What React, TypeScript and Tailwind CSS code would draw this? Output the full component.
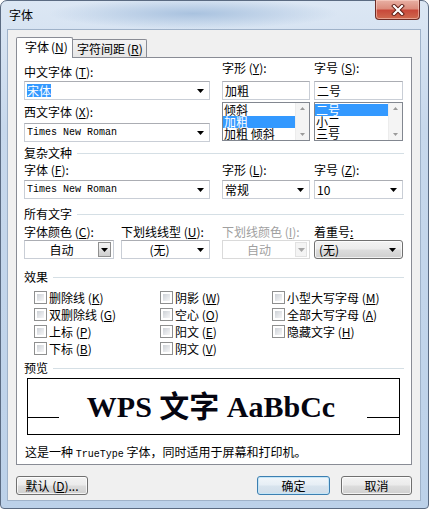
import type { ReactNode } from 'react';

const btnFace =
  'bg-[linear-gradient(180deg,#f3f3f3_0%,#ebebeb_48%,#dddddd_52%,#cfcfcf_100%)]';

function Key({ children }: { children: ReactNode }) {
  return <span className="underline underline-offset-[1px]">{children}</span>;
}

function Label({ text, k, colon = true, disabled, className = '' }: { text: string; k: string; colon?: boolean; disabled?: boolean; className?: string }) {
  return (
    <div className={`h-[14px] leading-[14px] whitespace-nowrap ${disabled ? 'text-[#a0a0a0]' : ''} ${className}`}>
      {text} (<Key>{k}</Key>){colon ? ':' : ''}
    </div>
  );
}

function Arrow({ disabled, className = '' }: { disabled?: boolean; className?: string }) {
  return (
    <svg width="7" height="4" viewBox="0 0 7 4" className={`shrink-0 ${className}`}>
      <path d="M0 0h7L3.5 4z" fill={disabled ? '#a6a6a6' : '#000'} />
    </svg>
  );
}

function Combo({ children, className = '', center, mono }: { children: ReactNode; className?: string; center?: boolean; mono?: boolean }) {
  return (
    <div className={`h-[19px] border border-[#c9ced6] border-t-[#abadb3] bg-white flex items-center ${className}`}>
      <div className={`flex-1 whitespace-nowrap ${center ? 'text-center' : 'pl-[2px]'} ${mono ? "font-['Liberation_Mono',monospace] text-[10px]" : ''}`}>
        {children}
      </div>
      <Arrow className="mr-[5px]" />
    </div>
  );
}

function Header({ title, className = '' }: { title: string; className?: string }) {
  return (
    <div className={`h-[14px] leading-[14px] flex items-center ${className}`}>
      <span>{title}</span>
      <div className="flex-1 h-px bg-[#d5dfe5] ml-[5px]" />
    </div>
  );
}

function ScrollStrip() {
  return (
    <div className="w-[14px] bg-[#f4f4f4] border-l border-[#ececec] flex flex-col items-center justify-between py-[4px]">
      <svg width="5" height="3" viewBox="0 0 5 3"><path d="M2.5 0L5 3H0z" fill="#9a9a9a" /></svg>
      <svg width="5" height="3" viewBox="0 0 5 3"><path d="M0 0h5L2.5 3z" fill="#9a9a9a" /></svg>
    </div>
  );
}

function ListBox({ items, selected }: { items: string[]; selected: number }) {
  return (
    <div className="h-[39px] mt-[2px] border border-[#828790] bg-white flex">
      <div className="flex-1 flex flex-col pt-[1px]">
        {items.map((it, i) => (
          <div key={it} className={`h-[12px] leading-[12px] pl-[1px] whitespace-nowrap ${i === selected ? 'bg-[#3399ff] text-white' : ''}`}>
            {it}
          </div>
        ))}
      </div>
      <ScrollStrip />
    </div>
  );
}

function Check({ text, k }: { text: string; k: string }) {
  return (
    <div className="h-[17px] flex items-center gap-[2px] whitespace-nowrap">
      <span className="w-[13px] h-[13px] border border-[#8e8f8f] bg-white p-[2px] shrink-0">
        <span className="block w-full h-full bg-[linear-gradient(135deg,#cdd1d6_0%,#e6e8eb_60%,#f6f6f6_100%)]" />
      </span>
      <span>
        {text} (<Key>{k}</Key>)
      </span>
    </div>
  );
}

function Button({ children, className = '', primary }: { children: ReactNode; className?: string; primary?: boolean }) {
  return (
    <div
      className={`h-[19px] rounded-[3px] border flex items-center justify-center whitespace-nowrap ${
        primary
          ? 'border-[#3c7fb1] bg-[linear-gradient(180deg,#f1f6fa_0%,#e6eef5_48%,#d8e4ee_52%,#d0dde9_100%)] shadow-[inset_0_0_0_1px_#c4e5f7]'
          : `border-[#707070] ${btnFace} shadow-[inset_0_0_0_1px_rgba(255,255,255,0.75)]`
      } ${className}`}
    >
      {children}
    </div>
  );
}

export default function App() {
  return (
    <div className="w-[429px] h-[509px] bg-white font-['Noto_Sans_CJK_SC',sans-serif] text-[12px] text-black">
      <div className="relative w-full h-full rounded-t-[7px] rounded-b-[4px] border border-[#5b6b82] bg-[linear-gradient(180deg,#dce7f4_0%,#c7d8ec_25%,#bcd1e9_100%)] pl-[6px] pr-[7px] pb-[7px] flex flex-col">
        {/* caption */}
        <div className="h-[28px] flex items-center pl-[2px] pb-[1px] bg-[radial-gradient(ellipse_35%_55%_at_45%_45%,#a9c2df_0%,rgba(169,194,223,0)_100%)]">
          字体
        </div>
        <div className="absolute top-[-1px] right-[8px] w-[45px] h-[20px] rounded-b-[4px] border border-t-0 border-[#6e2c25] bg-[linear-gradient(180deg,#e8b0a4_0%,#dc8d7d_45%,#c8493a_55%,#cf6a4f_100%)] shadow-[inset_0_0_0_1px_rgba(255,220,210,0.5)] flex items-center justify-center">
          <svg width="14" height="12" viewBox="0 0 14 12">
            <path d="M3 2l8 8M11 2l-8 8" stroke="#5a1a12" strokeWidth="4" strokeLinecap="square" />
            <path d="M3 2l8 8M11 2l-8 8" stroke="#fff" strokeWidth="2.2" strokeLinecap="square" />
          </svg>
        </div>

        {/* client area */}
        <div className="flex-1 border border-[#9fb2c9] bg-[#f0f0f0] px-[8px] pt-[7px] flex flex-col">
          {/* tabs */}
          <div className="h-[20px] flex items-end">
            <div className="relative z-10 w-[57px] h-[21px] -mb-px bg-white border border-b-0 border-[#898c95] rounded-t-[2px] pl-[8px] leading-[18px] whitespace-nowrap">
              字体<span className="ml-[2px]">(<Key>N</Key>)</span>
            </div>
            <div className="w-[75px] h-[18px] -ml-px bg-[linear-gradient(180deg,#f3f3f3_0%,#e6e6e6_100%)] border border-l-0 border-b-0 border-[#898c95] rounded-tr-[2px] pl-[5px] leading-[17px] whitespace-nowrap">
              字符间距<span className="ml-[2px]">(<Key>R</Key>)</span>
            </div>
          </div>

          {/* tab page */}
          <div className="h-[408px] border border-[#898c95] bg-white pl-[7px] pr-[7px] flex flex-col">
            <div className="flex pt-[7px]">
              <div className="w-[186px] flex flex-col">
                <Label text="中文字体" k="T" />
                <div className="mt-[2px] h-[19px] border border-[#c9ced6] border-t-[#abadb3] bg-white flex items-center">
                  <div className="flex-1 pl-[2px]">
                    <span className="bg-[#3399ff] text-white leading-[13px] inline-block">宋体</span>
                  </div>
                  <Arrow className="mr-[5px]" />
                </div>
                <Label text="西文字体" k="X" className="mt-[5px]" />
                <Combo className="mt-[4px]" mono>Times New Roman</Combo>
              </div>
              <div className="w-[88px] ml-[12px] flex flex-col -mt-[4px]">
                <Label text="字形" k="Y" />
                <div className="mt-[6px] h-[19px] border border-[#c9ced6] border-t-[#abadb3] bg-white pl-[2px] leading-[17px]">加粗</div>
                <ListBox items={['倾斜', '加粗', '加粗 倾斜']} selected={1} />
              </div>
              <div className="w-[89px] ml-[4px] flex flex-col -mt-[4px]">
                <Label text="字号" k="S" />
                <div className="mt-[6px] h-[19px] border border-[#c9ced6] border-t-[#abadb3] bg-white pl-[2px] leading-[17px]">二号</div>
                <ListBox items={['二号', '小二', '三号']} selected={0} />
              </div>
            </div>

            <Header title="复杂文种" className="mt-[4px]" />
            <div className="flex mt-[3px]">
              <div className="w-[186px] flex flex-col">
                <Label text="字体" k="F" />
                <Combo className="mt-[3px]" mono>Times New Roman</Combo>
              </div>
              <div className="w-[88px] ml-[12px] flex flex-col">
                <Label text="字形" k="L" />
                <Combo className="mt-[3px]">常规</Combo>
              </div>
              <div className="w-[89px] ml-[4px] flex flex-col">
                <Label text="字号" k="Z" />
                <Combo className="mt-[3px]">10</Combo>
              </div>
            </div>

            <Header title="所有文字" className="mt-[8px]" />
            <div className="flex mt-[4px]">
              <div className="w-[90px] flex flex-col">
                <Label text="字体颜色" k="C" />
                <div className="mt-[1px] h-[19px] border border-[#c9ced6] border-t-[#abadb3] bg-white flex items-center">
                  <div className="flex-1 text-center">自动</div>
                  <div className={`w-[13px] h-[15px] mr-[2px] border border-[#8f8f8f] ${btnFace} flex items-center justify-center`}>
                    <Arrow />
                  </div>
                </div>
              </div>
              <div className="w-[89px] ml-[7px] flex flex-col">
                <Label text="下划线线型" k="U" />
                <Combo className="mt-[1px]" center>(无)</Combo>
              </div>
              <div className="w-[88px] ml-[12px] flex flex-col">
                <Label text="下划线颜色" k="I" disabled />
                <div className="mt-[1px] h-[19px] border border-[#dadada] bg-white flex items-center">
                  <div className="flex-1 text-center text-[#a0a0a0]">自动</div>
                  <div className="w-[12px] h-[15px] mr-[2px] border border-[#e2e2e2] bg-[#f4f4f4] flex items-center justify-center">
                    <Arrow disabled />
                  </div>
                </div>
              </div>
              <div className="w-[89px] ml-[4px] flex flex-col">
                <div className="h-[14px] leading-[14px]">
                  着重号<Key>:</Key>
                </div>
                <div className={`mt-[1px] h-[19px] rounded-[3px] border border-[#707070] ${btnFace} shadow-[inset_0_0_0_1px_rgba(255,255,255,0.7)] flex items-center`}>
                  <div className="flex-1 pl-[4px]">(无)</div>
                  <Arrow className="mr-[6px]" />
                </div>
              </div>
            </div>

            <Header title="效果" className="mt-[11px]" />
            <div className="ml-[10px] mt-[5px] grid grid-cols-[126px_112px_1fr]">
              <div className="flex flex-col">
                <Check text="删除线" k="K" />
                <Check text="双删除线" k="G" />
                <Check text="上标" k="P" />
                <Check text="下标" k="B" />
              </div>
              <div className="flex flex-col">
                <Check text="阴影" k="W" />
                <Check text="空心" k="O" />
                <Check text="阳文" k="E" />
                <Check text="阴文" k="V" />
              </div>
              <div className="flex flex-col">
                <Check text="小型大写字母" k="M" />
                <Check text="全部大写字母" k="A" />
                <Check text="隐藏文字" k="H" />
              </div>
            </div>

            <Header title="预览" className="mt-[4px]" />
            <div className="ml-[3px] mr-[4px] mt-[3px] h-[57px] border border-black flex">
              <div className="w-[31px] h-px bg-black mt-[38px]" />
              <div className="flex-1 text-center pt-[13px] pr-[4px] leading-[30px] text-[30px] font-bold text-[#050510] font-['Liberation_Serif','Noto_Sans_CJK_SC',serif] whitespace-pre">
                WPS 文字 AaBbCc
              </div>
              <div className="w-[32px] h-px bg-black mt-[38px]" />
            </div>

            <div className="mt-[10px] h-[14px] leading-[14px] pl-px whitespace-nowrap">
              这是一种 <span className="font-['Liberation_Mono',monospace] text-[10px]">TrueType</span> 字体，同时适用于屏幕和打印机。
            </div>
          </div>

          {/* dialog buttons */}
          <div className="mt-[11px] flex">
            <Button className="w-[72px]">
              默认 (<Key>D</Key>)...
            </Button>
            <Button className="w-[73px] ml-auto mr-[11px]" primary>
              确定
            </Button>
            <Button className="w-[71px]">取消</Button>
          </div>
        </div>
      </div>
    </div>
  );
}
